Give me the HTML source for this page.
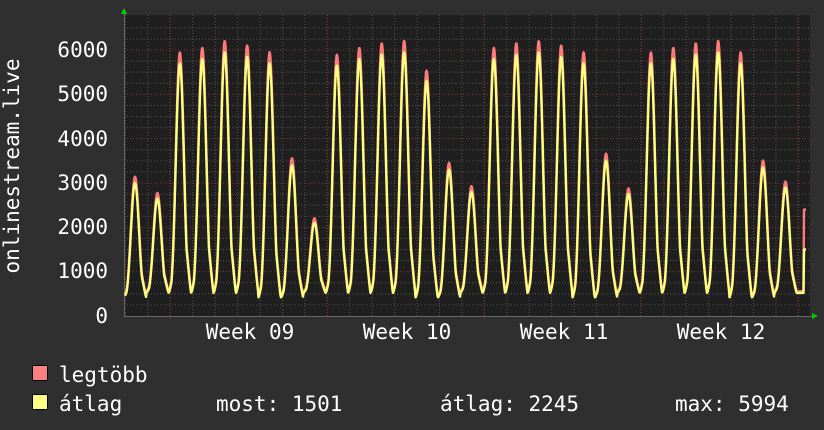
<!DOCTYPE html>
<html><head><meta charset="utf-8"><style>
body{margin:0;background:#2f2f2f;width:824px;height:430px;overflow:hidden}
svg{display:block}
text{font-family:"DejaVu Sans Mono","Liberation Mono",monospace;font-size:21px;fill:#fff}
</style></head><body>
<svg id="s" width="824" height="430" xmlns="http://www.w3.org/2000/svg">
<rect x="0" y="0" width="824" height="430" fill="#2f2f2f"/>
<rect x="124" y="15" width="686" height="302" fill="#1f1f1f"/>
<g id="grid"></g>
<path id="red" fill="none" stroke="#ff7a7a" stroke-width="2.4" stroke-linejoin="round"/>
<path id="yel" fill="none" stroke="#ffff80" stroke-width="2.4" stroke-linejoin="round"/>
<polygon points="121,14 127,14 124,8" fill="#00cc00"/>
<polygon points="812,313 812,319 818,316" fill="#00cc00"/>
<g text-anchor="end">
<text x="108" y="57">6000</text><text x="108" y="101">5000</text><text x="108" y="146">4000</text>
<text x="108" y="190">3000</text><text x="108" y="234">2000</text><text x="108" y="278">1000</text>
<text x="108" y="323">0</text></g>
<g text-anchor="middle">
<text x="250" y="339">Week 09</text><text x="407" y="339">Week 10</text>
<text x="564" y="339">Week 11</text><text x="721" y="339">Week 12</text></g>
<text transform="translate(19,166) rotate(-90)" text-anchor="middle">onlinestream.live</text>
<rect x="32.5" y="365.5" width="15" height="15" fill="#ff8080" stroke="#000"/>
<rect x="32.5" y="394.5" width="15" height="15" fill="#ffff80" stroke="#000"/>
<text x="59" y="382">legtöbb</text>
<text x="59" y="411">átlag</text>
<text x="216" y="411">most: 1501</text>
<text x="440" y="411">átlag: 2245</text>
<text x="675" y="411">max: 5994</text>
</svg>
<script>
var g=document.getElementById("grid"),h="";
function Y(v){return 316-v*0.04433;}
for(var v=250;v<=6500;v+=250){var y=Y(v);if(y<15)break;var maj=v%1000==0;
h+='<line x1="124" x2="810" y1="'+y+'" y2="'+y+'" stroke="'+(maj?'#7a3a3a':'#555')+'" stroke-dasharray="1,2"/>';}
for(var x=125.5;x<810;x+=22.43){h+='<line y1="15" y2="316" x1="'+x+'" x2="'+x+'" stroke="#555" stroke-dasharray="1,2"/>';}
[170,327,484,641,798].forEach(function(x){h+='<line y1="15" y2="320" x1="'+x+'" x2="'+x+'" stroke="#7a3a3a" stroke-dasharray="1,2"/>';});
h+='<line x1="124" x2="813" y1="316.5" y2="316.5" stroke="#666"/><line x1="124.5" x2="124.5" y1="12" y2="316" stroke="#666"/>';
g.innerHTML=h;
var pk=[3000,2650,5700,5800,5950,5850,5700,3400,2100,5650,5800,5900,5950,5300,3300,2800,5800,5900,5950,5850,5700,3500,2750,5700,5800,5900,5950,5700,3350,2900];
var r="",yl="";
for(var x=125;x<=806;x+=0.5){var k=Math.round((x-135)/22.43);if(k<0)k=0;if(k>29)k=29;
var px=135+k*22.43,d=(x-px)/22.43;var c=Math.cos(Math.PI*d);c=c>0?c:0;
var f=Math.pow(c,3.2);
if(d>0){f=Math.max(f,0.35*Math.pow(c,1.2));}else{f=Math.max(f,0.2*Math.pow(c,1.5));}
var base=(k%7==6||k%7==0)?420:520;
var v=base+(pk[k]-base)*f;
var vr=v+(v-base)*0.04+40;
if(x>=804){v=1500;vr=2400;}
r+=(x==125?"M":"L")+x+","+Y(vr).toFixed(1);yl+=(x==125?"M":"L")+x+","+Y(v).toFixed(1);}
document.getElementById("red").setAttribute("d",r);
document.getElementById("yel").setAttribute("d",yl);
</script>
</body></html>
